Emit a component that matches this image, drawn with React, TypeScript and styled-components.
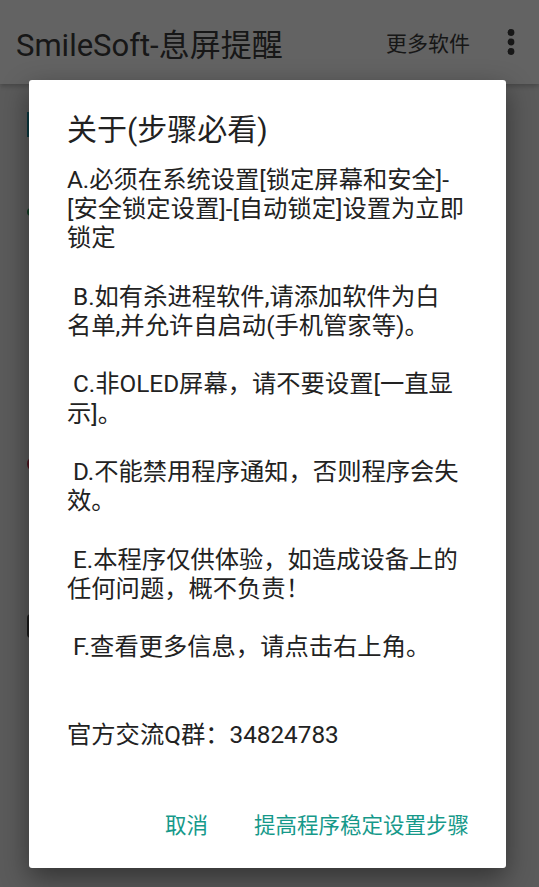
import styled, { createGlobalStyle } from "styled-components";

const GlobalStyle = createGlobalStyle`
  html, body {
    margin: 0;
    padding: 0;
    background: #5b5b5b;
  }
  body {
    font-family: "Roboto", "Noto Sans CJK SC", sans-serif;
    -webkit-font-smoothing: antialiased;
  }
`;

const aboutLines = [
  "A.必须在系统设置[锁定屏幕和安全]-",
  "[安全锁定设置]-[自动锁定]设置为立即",
  "锁定",
  "",
  " B.如有杀进程软件,请添加软件为白",
  "名单,并允许自启动(手机管家等)。",
  "",
  " C.非OLED屏幕，请不要设置[一直显",
  "示]。",
  "",
  " D.不能禁用程序通知，否则程序会失",
  "效。",
  "",
  " E.本程序仅供体验，如造成设备上的",
  "任何问题，概不负责！",
  "",
  " F.查看更多信息，请点击右上角。",
  "",
  "",
  "官方交流Q群：34824783",
];

const MoreIcon = () => (
  <svg width="8" height="28" viewBox="0 0 8 28">
    <circle cx="4" cy="4.5" r="3.4" fill="currentColor" />
    <circle cx="4" cy="14" r="3.4" fill="currentColor" />
    <circle cx="4" cy="23.5" r="3.4" fill="currentColor" />
  </svg>
);

const App = () => {
  return (
    <>
      <GlobalStyle />
      <Screen>
        <AppBar>
          <AppTitle>SmileSoft-息屏提醒</AppTitle>
          <BarAction>更多软件</BarAction>
          <Overflow>
            <MoreIcon />
          </Overflow>
        </AppBar>
        <Content>
          <Cursor />
          <Dot $color="#2e9b5a" />
          <Ring />
          <Thumb />
        </Content>

        <Scrim>
          <Dialog>
            <DialogTitle>关于(步骤必看)</DialogTitle>
            <DialogBody>
              {aboutLines.map((line, i) => (
                <Line key={i}>{line || "\u00a0"}</Line>
              ))}
            </DialogBody>
            <Actions>
              <TextButton>取消</TextButton>
              <TextButton>提高程序稳定设置步骤</TextButton>
            </Actions>
          </Dialog>
        </Scrim>
      </Screen>
    </>
  );
};

export default App;

const Screen = styled.div`
  position: relative;
  width: 539px;
  height: 887px;
  overflow: hidden;
  background: #e4e4e4;
`;

const AppBar = styled.div`
  display: flex;
  align-items: center;
  height: 84px;
  padding: 0 24px 0 16px;
  box-sizing: border-box;
  background: #f7f7f7;
  box-shadow: 0 2px 5px rgba(0, 0, 0, 0.25);
  color: #3a3a3a;
`;

const AppTitle = styled.h1`
  flex: 1;
  margin: 0;
  font-size: 31px;
  font-weight: 400;
  white-space: nowrap;
`;

const BarAction = styled.span`
  font-size: 21px;
  margin-right: 37px;
`;

const Overflow = styled.span`
  display: flex;
  align-items: center;
`;

const Content = styled.div`
  display: flex;
  flex-direction: column;
  align-items: flex-start;
  padding: 28px 0 0 27px;
`;

const Cursor = styled.div`
  width: 3px;
  height: 25px;
  background: #1c8ea0;
`;

const Dot = styled.div<{ $color: string }>`
  width: 8px;
  height: 8px;
  margin-top: 71px;
  border-radius: 50%;
  background: ${(p) => p.$color};
`;

const Ring = styled.div`
  width: 14px;
  height: 14px;
  margin-top: 239px;
  border: 2px solid #c0304a;
  border-radius: 50%;
`;

const Thumb = styled.div`
  width: 10px;
  height: 24px;
  margin-top: 141px;
  border-radius: 4px;
  background: #444;
`;

const Scrim = styled.div`
  position: absolute;
  inset: 0;
  display: flex;
  align-items: flex-start;
  background: rgba(0, 0, 0, 0.6);
`;

const Dialog = styled.div`
  display: flex;
  flex-direction: column;
  width: 477px;
  margin: 80px 0 0 29px;
  padding: 32px 38px 18px;
  box-sizing: border-box;
  background: #fff;
  border-radius: 3px;
  box-shadow: 0 10px 28px rgba(0, 0, 0, 0.45);
`;

const DialogTitle = styled.h2`
  margin: 0;
  font-size: 30px;
  line-height: 36px;
  font-weight: 400;
  color: #212121;
`;

const DialogBody = styled.div`
  margin-top: 17px;
  font-size: 24.3px;
  line-height: 29.2px;
  color: #222;
`;

const Line = styled.div`
  white-space: pre;
`;

const Actions = styled.div`
  display: flex;
  justify-content: flex-end;
  gap: 22px;
  margin: 47px -13px 0 0;
`;

const TextButton = styled.button`
  height: 54px;
  padding: 0 12px;
  border: none;
  background: none;
  font-family: "Roboto", "Noto Sans CJK SC", sans-serif;
  font-size: 21.5px;
  color: #16998a;
  cursor: pointer;
`;
